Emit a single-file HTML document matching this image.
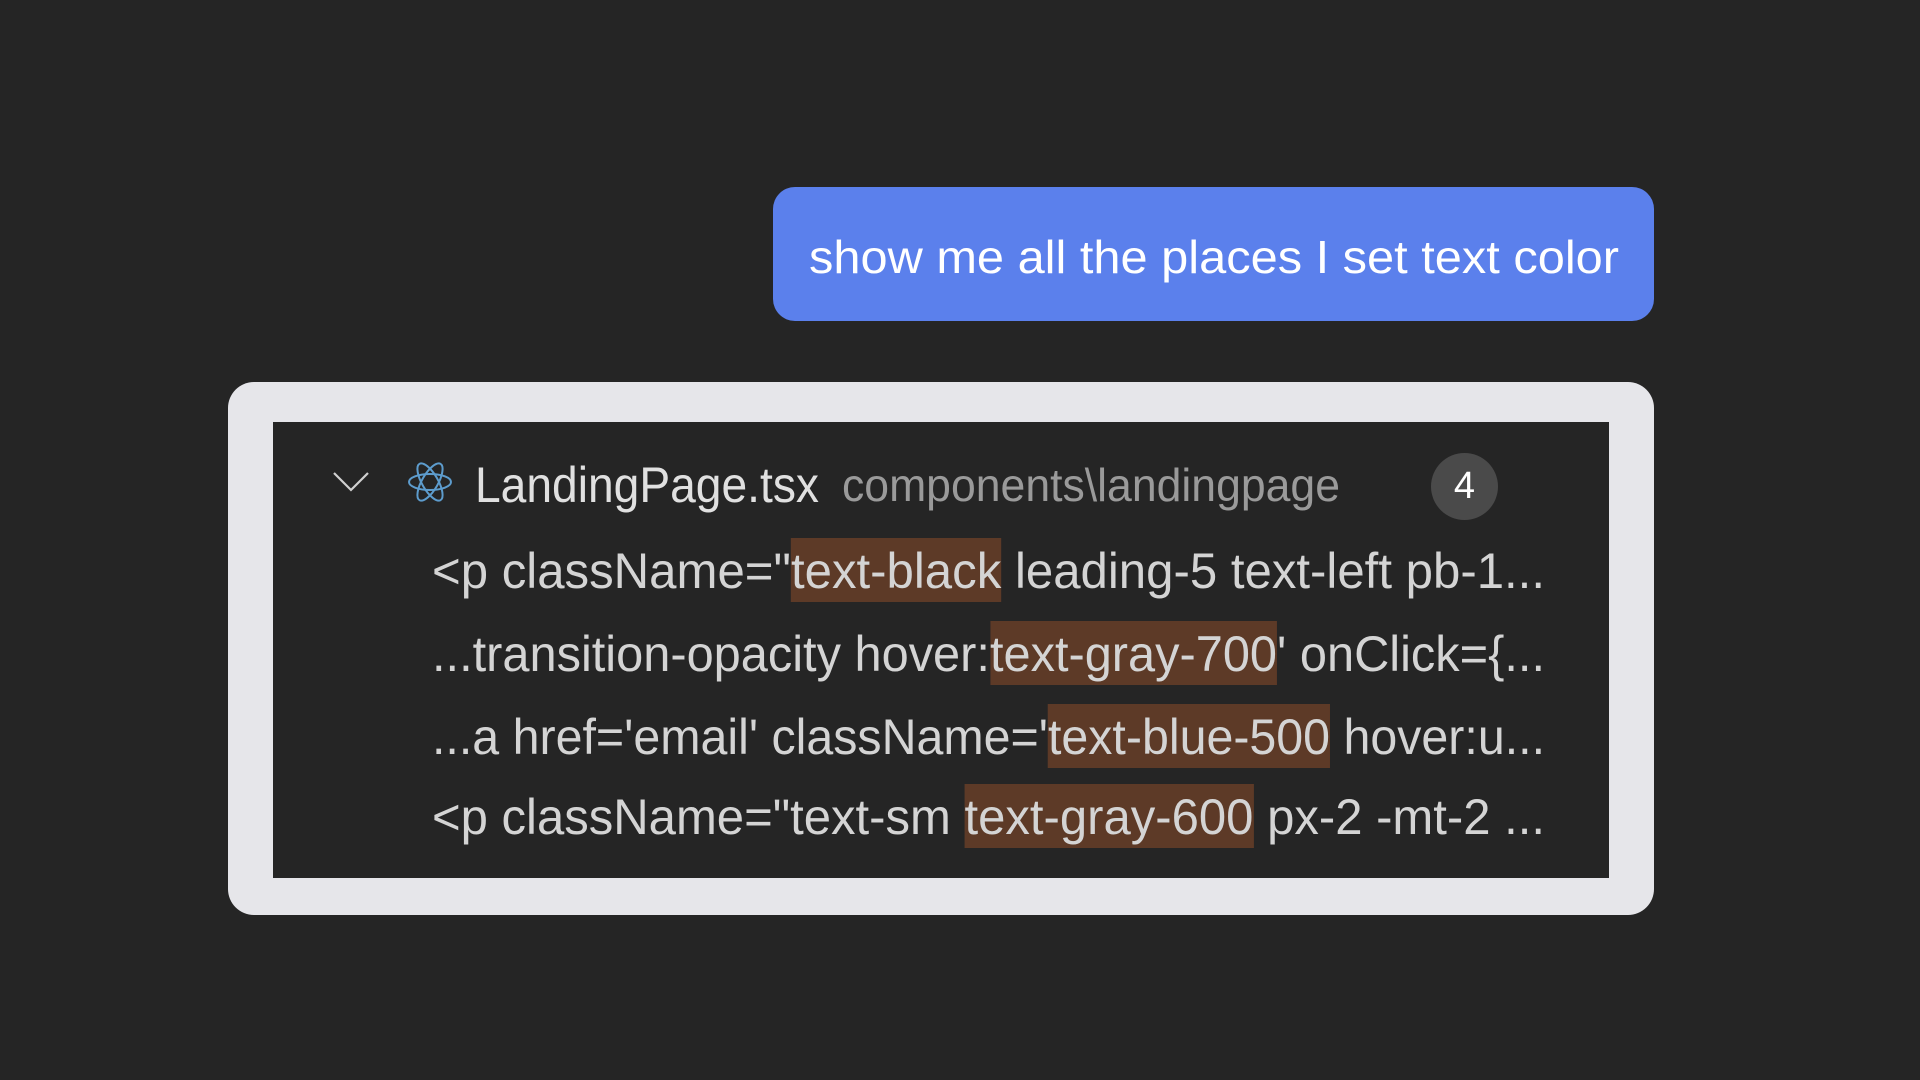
<!DOCTYPE html>
<html><head><meta charset="utf-8"><style>
html,body{margin:0;padding:0;width:1920px;height:1080px;background:#252525;overflow:hidden;font-family:"Segoe UI","Liberation Sans",sans-serif;}
.abs{position:absolute;white-space:nowrap;line-height:1;transform-origin:0 0;}
#bubble{position:absolute;left:773px;top:187px;width:881px;height:134px;background:#5b80ec;border-radius:22px;}
#card{position:absolute;left:228px;top:382px;width:1426px;height:533px;background:#e6e6ea;border-radius:26px;}
#inner{position:absolute;left:273px;top:422px;width:1336px;height:456px;background:#252525;}
.row{font-size:50px;color:#d4d4d4;}
.hl{background:#5d3a27;padding:5px 0 3px;}
#badge{position:absolute;left:1431px;top:453px;width:67px;height:67px;border-radius:50%;background:#4a4a4a;color:#fff;font-size:38px;text-align:center;line-height:67px;}
</style></head><body>
<div id="bubble"></div>
<div class="abs" id="t0" style="left:809px;top:234px;font-size:46px;color:#fff;">show me all the places I set text color</div>
<div id="card"></div>
<div id="inner"></div>
<svg style="position:absolute;left:330px;top:468px" width="44" height="30"><path d="M4 5 L21 22 L38 5" fill="none" stroke="#d0d0d0" stroke-width="2.2"/></svg>
<svg style="position:absolute;left:405px;top:457px" width="50" height="50" viewBox="-25 -25 50 50"><g fill="none" stroke="#5d9ccd" stroke-width="2"><ellipse rx="21" ry="8"/><ellipse rx="21" ry="8" transform="rotate(60)"/><ellipse rx="21" ry="8" transform="rotate(120)"/></g></svg>
<div class="abs row" id="h1" style="left:475px;top:460px;color:#e0e0e0;">LandingPage.tsx</div>
<div class="abs row" id="h2" style="left:842px;top:462px;color:#9a9a9a;font-size:46px;">components\landingpage</div>
<div id="badge">4</div>
<div class="abs row" id="r1" style="left:432px;top:546px;">&lt;p className="<span class="hl">text-black</span> leading-5 text-left pb-1...</div>
<div class="abs row" id="r2" style="left:432px;top:629px;">...transition-opacity hover:<span class="hl">text-gray-700</span>' onClick={...</div>
<div class="abs row" id="r3" style="left:432px;top:712px;">...a href='email' className='<span class="hl">text-blue-500</span> hover:u...</div>
<div class="abs row" id="r4" style="left:432px;top:792px;">&lt;p className="text-sm <span class="hl">text-gray-600</span> px-2 -mt-2 ...</div>
<script>
var W={t0:810,h1:344,h2:498,r1:1113,r2:1113,r3:1113,r4:1113};
for(var k in W){var e=document.getElementById(k);var w=e.getBoundingClientRect().width;e.style.transform="scaleX("+(W[k]/w)+")";}
</script>
</body></html>
